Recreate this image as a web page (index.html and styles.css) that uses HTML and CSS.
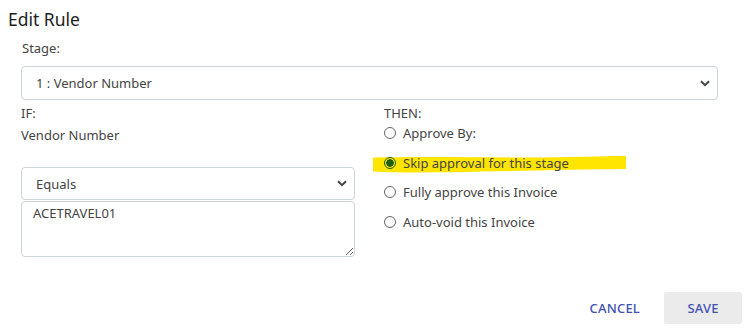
FILE: index.html
```html
<!DOCTYPE html>
<html lang="en">
<head>
    <meta charset="UTF-8">
    <meta name="viewport" content="width=device-width, initial-scale=1.0">
    <title>Edit Rule</title>
    <link rel="stylesheet" href="styles.css">
</head>
<body>
<div class="dialog">
    <h2 class="dialog-title">Edit Rule</h2>

    <div class="dialog-body">
        <label class="field-label" for="stage">Stage:</label>
        <select id="stage" class="select">
            <option>1 : Vendor Number</option>
        </select>

        <div class="rule-cols">
            <div class="col">
                <div class="col-head">IF:</div>
                <div class="field-name">Vendor Number</div>
                <select class="select select-op">
                    <option>Equals</option>
                </select>
                <textarea class="value-box">ACETRAVEL01</textarea>
            </div>

            <div class="col">
                <div class="col-head">THEN:</div>
                <label class="radio-row">
                    <input type="radio" name="action">
                    <span>Approve By:</span>
                </label>
                <label class="radio-row marked">
                    <svg class="marker" width="256" height="20" viewBox="0 0 256 20">
                        <path d="M1 3.5 C40 2.5, 90 3, 140 3.5 C190 4, 225 2, 254 2 L254 15 C210 15.5, 160 16.5, 110 17.5 C70 18.5, 30 19, 1 17.5 Z" fill="#ffe500"/>
                    </svg>
                    <input type="radio" name="action" checked>
                    <span>Skip approval for this stage</span>
                </label>
                <label class="radio-row">
                    <input type="radio" name="action">
                    <span>Fully approve this Invoice</span>
                </label>
                <label class="radio-row">
                    <input type="radio" name="action">
                    <span>Auto-void this Invoice</span>
                </label>
            </div>
        </div>
    </div>

    <div class="dialog-actions">
        <button class="btn btn-text">CANCEL</button>
        <button class="btn btn-save">SAVE</button>
    </div>
</div>
</body>
</html>
```

FILE: styles.css
```css
html, body {
    margin: 0;
    padding: 0;
    background-color: #ffffff;
    font-family: "Noto Sans", "Open Sans", Arial, sans-serif;
    color: #333;
}

.dialog {
    width: 749px;
    height: 331px;
    box-sizing: border-box;
    padding-top: 7px;
}

.dialog-title {
    margin: 0 0 0 8px;
    font-size: 17.5px;
    font-weight: 400;
    color: #1e1e1e;
    line-height: 24px;
}

.dialog-body {
    padding: 0 31px 0 21px;
}

.field-label {
    display: block;
    font-size: 13px;
    color: #444;
    line-height: 18px;
    margin-top: 8px;
    margin-bottom: 9px;
    padding-left: 1px;
}

.select {
    display: block;
    width: 100%;
    height: 34px;
    box-sizing: border-box;
    border: 1px solid #ced4da;
    border-radius: 4px;
    padding: 0 14px;
    font-family: inherit;
    font-size: 13px;
    color: #444;
    background: #fff url("data:image/svg+xml;utf8,<svg xmlns='http://www.w3.org/2000/svg' width='10' height='7' viewBox='0 0 10 7'><path d='M1 1.2 L5 5.2 L9 1.2' fill='none' stroke='%23444' stroke-width='2'/></svg>") no-repeat right 7px center;
    -webkit-appearance: none;
    appearance: none;
}

.rule-cols {
    display: grid;
    grid-template-columns: 1fr 1fr;
    column-gap: 29px;
    margin-top: 4px;
}

.col-head {
    font-size: 13px;
    color: #444;
    line-height: 18px;
}

.field-name {
    font-size: 13px;
    color: #444;
    line-height: 18px;
    margin-top: 4px;
}

.select-op {
    margin-top: 23px;
    height: 33px;
}

.value-box {
    display: block;
    width: 100%;
    height: 56px;
    box-sizing: border-box;
    margin-top: 1px;
    border: 1px solid #ced4da;
    border-radius: 4px;
    padding: 2px 11px;
    font-family: inherit;
    font-size: 13px;
    color: #444;
    resize: vertical;
}

.radio-row {
    position: relative;
    display: flex;
    align-items: center;
    gap: 7px;
    height: 18px;
    font-size: 13px;
    color: #444;
    margin-top: 2px;
    margin-bottom: 7.5px;
}

.radio-row + .radio-row {
    margin-top: 11.5px;
}

.radio-row input {
    -webkit-appearance: none;
    appearance: none;
    width: 12px;
    height: 12px;
    margin: 0;
    border: 1px solid #666;
    border-radius: 50%;
    background: #fff;
    position: relative;
    z-index: 1;
}

.radio-row input:checked {
    border-color: #1f5a1f;
    background: radial-gradient(circle, #1c5e12 0 3.5px, #fff 4px);
}

.radio-row span {
    position: relative;
    z-index: 1;
}

.marked input:checked {
    background: radial-gradient(circle, #1c5e12 0 3.5px, #ffe500 4px);
}

.marker {
    position: absolute;
    left: -12px;
    top: 0;
    z-index: 0;
}

.dialog-actions {
    display: flex;
    justify-content: flex-end;
    align-items: center;
    gap: 24px;
    padding-right: 7px;
    margin-top: 35px;
}

.btn {
    font-family: inherit;
    font-size: 13px;
    font-weight: 500;
    color: #3f51b5;
    border: none;
    background: none;
    cursor: pointer;
    letter-spacing: 0.2px;
}

.btn-text {
    padding: 0;
}

.btn-save {
    width: 78px;
    height: 32px;
    background-color: #ebebeb;
    border-radius: 2px;
}
```
